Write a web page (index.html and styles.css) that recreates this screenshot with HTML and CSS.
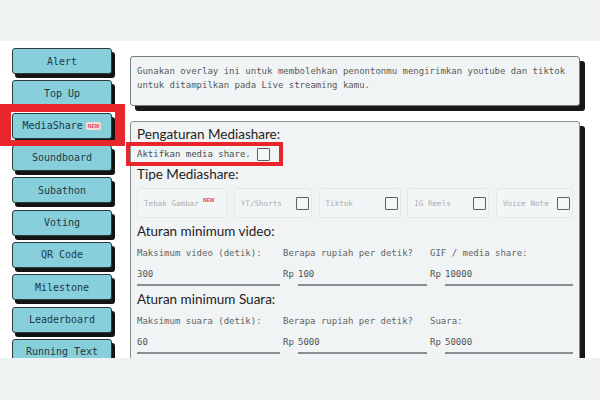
FILE: index.html
```html
<!DOCTYPE html>
<html lang="id">
<head>
<meta charset="utf-8">
<title>Mediashare</title>
<link rel="stylesheet" href="styles.css">
</head>
<body>
<div class="stage">
  <nav class="sidebar">
    <div class="nav-btn">Alert</div>
    <div class="nav-btn">Top Up</div>
    <div class="nav-btn">MediaShare<span class="badge">NEW</span></div>
    <div class="nav-btn">Soundboard</div>
    <div class="nav-btn">Subathon</div>
    <div class="nav-btn">Voting</div>
    <div class="nav-btn">QR Code</div>
    <div class="nav-btn">Milestone</div>
    <div class="nav-btn">Leaderboard</div>
    <div class="nav-btn">Running Text</div>
  </nav>
  <main class="main">
    <div class="desc">Gunakan overlay ini untuk membolehkan penontonmu mengirimkan youtube dan tiktok untuk ditampilkan pada Live streaming kamu.</div>
    <section class="panel">
      <h2 class="heading">Pengaturan Mediashare:</h2>
      <div class="enable-row">
        <span class="enable-label">Aktifkan media share.</span>
        <span class="check"></span>
      </div>
      <h2 class="heading">Tipe Mediashare:</h2>
      <div class="types">
        <div class="type">Tebak Gambar<span class="new-tag">NEW</span></div>
        <div class="type">YT/Shorts<span class="check"></span></div>
        <div class="type">Tiktok<span class="check"></span></div>
        <div class="type">IG Reels<span class="check"></span></div>
        <div class="type">Voice Note<span class="check"></span></div>
      </div>
      <h2 class="heading">Aturan minimum video:</h2>
      <div class="fields">
        <div class="field">
          <div class="f-label">Maksimum video (detik):</div>
          <div class="f-input"><span class="f-line">300</span></div>
        </div>
        <div class="field">
          <div class="f-label">Berapa rupiah per detik?</div>
          <div class="f-input"><span class="rp">Rp</span><span class="f-line">100</span></div>
        </div>
        <div class="field">
          <div class="f-label">GIF / media share:</div>
          <div class="f-input"><span class="rp">Rp</span><span class="f-line">10000</span></div>
        </div>
      </div>
      <h2 class="heading">Aturan minimum Suara:</h2>
      <div class="fields">
        <div class="field">
          <div class="f-label">Maksimum suara (detik):</div>
          <div class="f-input"><span class="f-line">60</span></div>
        </div>
        <div class="field">
          <div class="f-label">Berapa rupiah per detik?</div>
          <div class="f-input"><span class="rp">Rp</span><span class="f-line">5000</span></div>
        </div>
        <div class="field">
          <div class="f-label">Suara:</div>
          <div class="f-input"><span class="rp">Rp</span><span class="f-line">50000</span></div>
        </div>
      </div>
    </section>
  </main>
</div>
<div class="mark mark-nav"></div>
</body>
</html>
```

FILE: styles.css
```css
*, *::before, *::after { box-sizing: border-box; }
html, body { margin: 0; padding: 0; }
body {
  width: 600px;
  height: 400px;
  background: #eff2f2;
  font-family: "DejaVu Sans Mono", "Liberation Mono", monospace;
  position: relative;
  overflow: hidden;
}
.stage {
  margin-top: 41px;
  height: 317px;
  background: #ffffff;
  display: flex;
  overflow: hidden;
}
.sidebar {
  width: 118px;
  padding: 7px 0 0 12px;
  display: flex;
  flex-direction: column;
  gap: 6.33px;
  flex-shrink: 0;
}
.nav-btn {
  width: 100px;
  height: 26px;
  flex-shrink: 0;
  background: #88cfdc;
  border: 1px solid #2a3a3e;
  border-radius: 3px;
  box-shadow: 3px 4px 0 #141414;
  color: #1d3a44;
  font-size: 10px;
  display: flex;
  align-items: center;
  justify-content: center;
  white-space: nowrap;
}
.badge {
  margin-left: 3px;
  background: #f6dede;
  color: #e0474c;
  font-family: "Liberation Sans", Arial, sans-serif;
  font-size: 5px;
  font-weight: bold;
  padding: 1px 2px;
  border-radius: 2px;
  line-height: 6px;
}
.main {
  margin-left: 12px;
  width: 450px;
  padding-top: 15px;
}
.desc {
  height: 50px;
  background: #f1f4f4;
  border: 1px solid #7c7f80;
  border-radius: 3px;
  box-shadow: 5px 5px 0 #171717;
  padding: 7px 6px;
  color: #555b5d;
  font-size: 9px;
  line-height: 14px;
}
.panel {
  margin-top: 15px;
  height: 260px;
  background: #f1f4f4;
  border: 1px solid #8a8d8e;
  border-radius: 3px;
  box-shadow: 5px 5px 0 #171717;
  padding: 3px 6px 0 6px;
}
.heading {
  margin: 0;
  font-family: Lato, "Open Sans", sans-serif;
  font-weight: normal;
  font-size: 13.5px;
  line-height: 18px;
  color: #1f2223;
}
.enable-row {
  position: relative;
  display: flex;
  align-items: center;
  height: 22px;
  font-size: 9px;
  color: #4a4f51;
  white-space: nowrap;
}
.enable-row::before {
  content: "";
  position: absolute;
  left: -11px;
  top: -1px;
  width: 157px;
  height: 24px;
  border: 4px solid #e8262b;
}
.enable-label { margin-right: 6px; }
.check {
  display: inline-block;
  width: 13px;
  height: 13px;
  border: 1.5px solid #5d6163;
  background: #f5f7f7;
  border-radius: 1px;
  flex-shrink: 0;
}
.types {
  display: grid;
  grid-template-columns: 90px 78px 82px 82px 77px;
  column-gap: 6.75px;
  margin-top: 5px;
  height: 30px;
}
.type {
  border: 1px solid #e3e8e8;
  border-radius: 3px;
  background: #f3f6f6;
  display: flex;
  align-items: center;
  justify-content: space-between;
  padding: 0 2px 0 6px;
  font-size: 7.6px;
  color: #a9aeb0;
  white-space: nowrap;
}
.type:first-child { justify-content: flex-start; }
.new-tag {
  font-family: "Liberation Sans", Arial, sans-serif;
  font-size: 5px;
  font-weight: bold;
  color: #e0474c;
  margin-left: 4px;
  position: relative;
  top: -3px;
}
.types + .heading { margin-top: 4px; }
.fields {
  display: grid;
  grid-template-columns: 143px 144px 143px;
  column-gap: 3px;
  margin-bottom: 4px;
}
.f-label {
  font-size: 9px;
  color: #5f6466;
  height: 22px;
  padding-top: 4px;
  line-height: 18px;
  white-space: nowrap;
}
.f-input {
  display: flex;
  font-size: 9px;
  color: #4f5456;
  height: 24px;
}
.rp { width: 15px; flex-shrink: 0; padding-top: 2px; line-height: 20px; }
.f-line {
  flex: 1;
  border-bottom: 2px solid #8a8e90;
  padding-top: 2px;
  line-height: 20px;
  height: 24px;
}
.mark {
  position: absolute;
  border: solid #e8262b;
}
.mark-nav {
  left: 0;
  top: 104px;
  width: 125px;
  height: 42px;
  border-width: 8px 10px 6px 11px;
}
```
